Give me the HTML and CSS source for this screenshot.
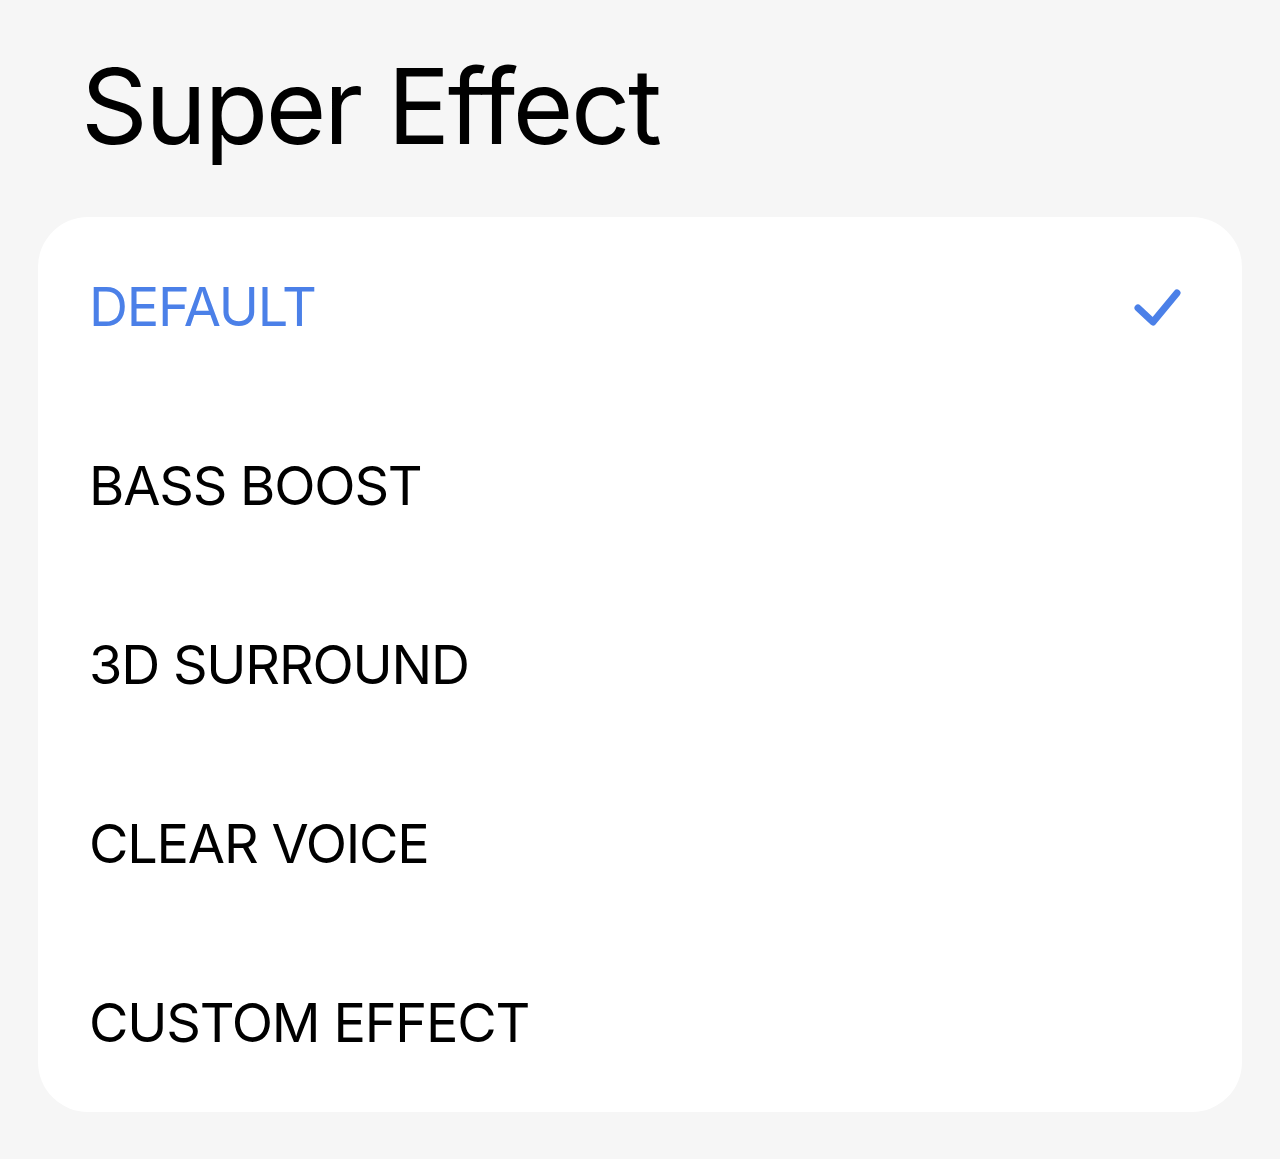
FILE: index.html
```html
<!DOCTYPE html>
<html>
<head>
<meta charset="utf-8">
<link rel="stylesheet" href="styles.css">
</head>
<body>
<div class="page">
  <h1 class="title">Super Effect</h1>
  <div class="card">
    <div class="row active">
      <span class="label">DEFAULT</span>
      <svg class="check" width="50" height="40" viewBox="0 0 50 40"><path d="M5 21 L20 35 L44 6" fill="none" stroke="#4b80e8" stroke-width="7" stroke-linecap="round" stroke-linejoin="round"/></svg>
    </div>
    <div class="row"><span class="label">BASS BOOST</span></div>
    <div class="row"><span class="label">3D SURROUND</span></div>
    <div class="row"><span class="label">CLEAR VOICE</span></div>
    <div class="row"><span class="label">CUSTOM EFFECT</span></div>
  </div>
</div>
</body>
</html>
```
FILE: styles.css
```css
html, body { margin: 0; padding: 0; }
body {
  background: #f6f6f6;
  font-family: Inter, "Noto Sans", sans-serif;
  width: 1280px;
  height: 1159px;
  overflow: hidden;
}
.page {
  padding: 0 38px;
}
.title {
  margin: 0;
  padding: 42px 0 0 43px;
  height: 217px;
  box-sizing: border-box;
  font-size: 104px;
  font-weight: 400;
  line-height: 128px;
  color: #000;
  letter-spacing: -2.4px;
}
.card {
  background: #fff;
  border-radius: 50px;
  width: 1204px;
}
.row {
  height: 179px;
  display: flex;
  align-items: center;
  justify-content: space-between;
  padding: 0 59px 0 51px;
}
.label {
  font-size: 54px;
  letter-spacing: -1.2px;
  color: #000;
  line-height: 1;
}
.row.active .label { color: #4b80e8; }
.check { display: block; }
```
